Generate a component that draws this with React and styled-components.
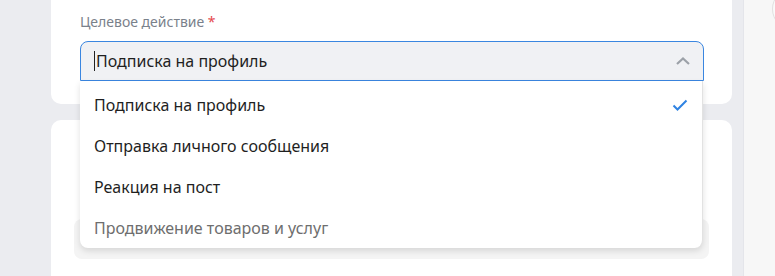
import React from 'react';
import styled, { createGlobalStyle } from 'styled-components';

const Global = createGlobalStyle`
  body {
    margin: 0;
    font-family: "Noto Sans", "Open Sans", sans-serif;
    background: #ebecf0;
  }
`

const Page = styled.div`
  display: flex;
  height: 276px;
  overflow: hidden;
  background: #ebecf0;
`

const Gutter = styled.div`
  flex: 0 0 51px;
`

const Main = styled.div`
  flex: 0 0 681px;
  display: flex;
  flex-direction: column;
  gap: 16px;
`

const TopCard = styled.div`
  height: 104px;
  background: #fff;
  border-radius: 0 0 10px 10px;
  padding: 12px 28px 0 29px;
  box-sizing: border-box;
`

const BottomCard = styled.div`
  flex: 1;
  background: #fff;
  border-radius: 10px 10px 0 0;
  padding: 99px 23px 0;
`

const Label = styled.div`
  font-size: 14px;
  line-height: 20px;
  color: #7a818b;
  margin-bottom: 9px;
  span { color: #e5484d; }
`

const SelectWrap = styled.div`
  position: relative;
  z-index: 2;
`

const Select = styled.div`
  height: 40px;
  box-sizing: border-box;
  display: flex;
  align-items: center;
  padding: 0 12px 0 13px;
  background: #f0f1f4;
  border: 1px solid #3a86e0;
  border-radius: 8px 8px 0 0;
  font-size: 16px;
  color: #1f1f1f;
`

const Caret = styled.span`
  width: 1px;
  height: 20px;
  background: #222;
  margin-right: 1px;
`

const Value = styled.span`
  flex: 1;
`

const Menu = styled.div`
  position: absolute;
  top: 100%;
  left: 0;
  right: 1px;
  background: #fff;
  border-radius: 0 0 8px 8px;
  border-right: 1px solid #e2e2e2;
  box-shadow: 0 3px 6px rgba(0, 0, 0, 0.12);
  padding-top: 3px;
`

const Item = styled.div`
  height: 41px;
  display: flex;
  align-items: center;
  justify-content: space-between;
  padding: 0 14px 0 14px;
  font-size: 16px;
  color: ${p => (p.muted ? '#6e6e6e' : '#1f1f1f')};
`

const Panel = styled.div`
  flex: 1;
  margin-left: 11px;
  background: #f7f7f7;
  border-left: 1px solid #e4e5ea;
`

const Avatar = styled.div`
  width: 40px;
  height: 40px;
  border-radius: 50%;
  border: 1px solid #e0e0e0;
  background: #fafafa;
  margin: -12px 0 0 28px;
`

const InfoBox = styled.div`
  height: 40px;
  background: #f4f4f4;
  border-radius: 8px;
`

const Chevron = () => (
  <svg width="16" height="10" viewBox="0 0 16 10">
    <path d="M2 8 L8 2.5 L14 8" fill="none" stroke="#9ca1a8" strokeWidth="2.2" />
  </svg>
)

const Check = () => (
  <svg width="16" height="12" viewBox="0 0 16 12">
    <path d="M1.5 6.5 L5.5 10.5 L14.5 1.5" fill="none" stroke="#2f83e2" strokeWidth="2" />
  </svg>
)

const options = [
  { label: 'Подписка на профиль', selected: true },
  { label: 'Отправка личного сообщения' },
  { label: 'Реакция на пост' },
  { label: 'Продвижение товаров и услуг', muted: true },
]

export default function App() {
  return (
    <Page>
      <Global />
      <Gutter />
      <Main>
        <TopCard>
          <Label>Целевое действие <span>*</span></Label>
          <SelectWrap>
            <Select>
              <Caret />
              <Value>Подписка на профиль</Value>
              <Chevron />
            </Select>
            <Menu>
              {options.map((o, i) => (
                <Item key={i} muted={o.muted}>
                  {o.label}
                  {o.selected && <Check />}
                </Item>
              ))}
            </Menu>
          </SelectWrap>
        </TopCard>
        <BottomCard>
          <InfoBox />
        </BottomCard>
      </Main>
      <Panel>
        <Avatar />
      </Panel>
    </Page>
  )
}
